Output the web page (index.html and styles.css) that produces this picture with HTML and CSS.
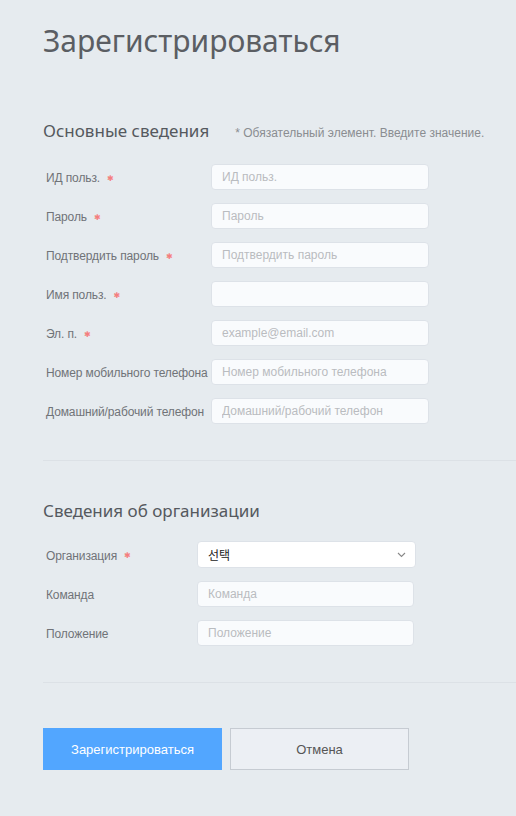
FILE: index.html
```html
<!DOCTYPE html>
<html lang="ru">
<head>
<meta charset="utf-8">
<link rel="stylesheet" href="styles.css">
</head>
<body>
<div class="page">
  <h1 class="title">Зарегистрироваться</h1>

  <section class="section first">
    <div class="sec-head">
      <h2 class="sec-title">Основные сведения</h2>
      <span class="note">* Обязательный элемент. Введите значение.</span>
    </div>
    <div class="rows">
      <div class="row"><label class="lbl">ИД польз.<span class="req">✱</span></label><input class="inp" placeholder="ИД польз."></div>
      <div class="row"><label class="lbl">Пароль<span class="req">✱</span></label><input class="inp" placeholder="Пароль"></div>
      <div class="row"><label class="lbl">Подтвердить пароль<span class="req">✱</span></label><input class="inp" placeholder="Подтвердить пароль"></div>
      <div class="row"><label class="lbl">Имя польз.<span class="req">✱</span></label><input class="inp"></div>
      <div class="row"><label class="lbl">Эл. п.<span class="req">✱</span></label><input class="inp" placeholder="example@email.com"></div>
      <div class="row"><label class="lbl">Номер мобильного телефона</label><input class="inp" placeholder="Номер мобильного телефона"></div>
      <div class="row"><label class="lbl">Домашний/рабочий телефон</label><input class="inp" placeholder="Домашний/рабочий телефон"></div>
    </div>
  </section>

  <hr class="divider">

  <section class="section second">
    <div class="sec-head">
      <h2 class="sec-title">Сведения об организации</h2>
    </div>
    <div class="rows">
      <div class="row"><label class="lbl lbl2">Организация<span class="req">✱</span></label>
        <div class="select"><span class="sel-text">선택</span>
          <svg class="chev" width="9" height="6" viewBox="0 0 9 6"><path d="M1 1 L4.5 4.5 L8 1" fill="none" stroke="#888" stroke-width="1.1"/></svg>
        </div>
      </div>
      <div class="row"><label class="lbl lbl2">Команда</label><input class="inp inp2" placeholder="Команда"></div>
      <div class="row"><label class="lbl lbl2">Положение</label><input class="inp inp2" placeholder="Положение"></div>
    </div>
  </section>

  <hr class="divider second-div">

  <div class="actions">
    <button class="btn primary">Зарегистрироваться</button>
    <button class="btn cancel">Отмена</button>
  </div>
</div>
</body>
</html>
```

FILE: styles.css
```css
html, body {
  margin: 0;
  padding: 0;
  background: #e6ebef;
}
body {
  font-family: "Liberation Sans", Arial, sans-serif;
  color: #666;
}
.page {
  padding: 21px 0 0 43px;
}
.title {
  margin: 0;
  font-family: "Noto Sans", "Open Sans", sans-serif;
  font-weight: 400;
  font-size: 30px;
  line-height: 40px;
  color: #5b5e63;
}
.section.first {
  margin-top: 58px;
}
.sec-head {
  display: flex;
  align-items: baseline;
  height: 24px;
}
.sec-title {
  margin: 0;
  font-family: "Noto Sans", "Open Sans", sans-serif;
  font-weight: 400;
  font-size: 17px;
  line-height: 24px;
  color: #55595e;
}
.note {
  margin-left: 26px;
  font-size: 12px;
  color: #8a8d91;
}
.rows {
  display: flex;
  flex-direction: column;
  gap: 13px;
  margin-top: 21px;
}
.row {
  display: flex;
  align-items: center;
  height: 26px;
  padding-left: 3px;
}
.lbl {
  width: 165px;
  flex: none;
  font-size: 12px;
  letter-spacing: -0.12px;
  color: #707378;
  white-space: nowrap;
  padding-top: 2px;
  display: flex;
  align-items: center;
}
.lbl2 {
  width: 151px;
}
.req {
  color: #f47f7f;
  margin-left: 7px;
  font-family: "DejaVu Sans", sans-serif;
  font-size: 8px;
}
.inp {
  box-sizing: border-box;
  width: 218px;
  height: 26px;
  border: 1px solid #dde2e8;
  border-radius: 4px;
  background: #f9fbfd;
  padding: 0 10px;
  font-family: "Liberation Sans", Arial, sans-serif;
  font-size: 12px;
  color: #333;
  outline: none;
}
.inp2 {
  width: 217px;
}
.inp::placeholder {
  color: #b9bcc0;
}
.divider {
  margin: 36px 0 0 0;
  border: 0;
  border-top: 1px solid #dce1e6;
  height: 0;
}
.second-div {
  margin-top: 36px;
}
.section.second {
  margin-top: 38px;
}
.second .rows {
  margin-top: 18px;
}
.second .row:first-child {
  height: 27px;
}
.select {
  box-sizing: border-box;
  width: 219px;
  height: 27px;
  border: 1px solid #dde2e8;
  border-radius: 4px;
  background: #fff;
  display: flex;
  align-items: center;
  justify-content: space-between;
  padding: 0 9px 0 10px;
}
.sel-text {
  font-family: "Noto Sans CJK KR", sans-serif;
  font-size: 12px;
  color: #222;
}
.chev {
  display: block;
}
.actions {
  display: flex;
  gap: 8px;
  margin-top: 45px;
}
.btn {
  box-sizing: border-box;
  width: 179px;
  height: 42px;
  font-family: "Liberation Sans", Arial, sans-serif;
  font-size: 13px;
  cursor: pointer;
  margin: 0;
}
.primary {
  background: #52a6ff;
  border: 0;
  color: #fff;
}
.cancel {
  background: #eceff4;
  border: 1px solid #c6cbd2;
  color: #555;
}
```
